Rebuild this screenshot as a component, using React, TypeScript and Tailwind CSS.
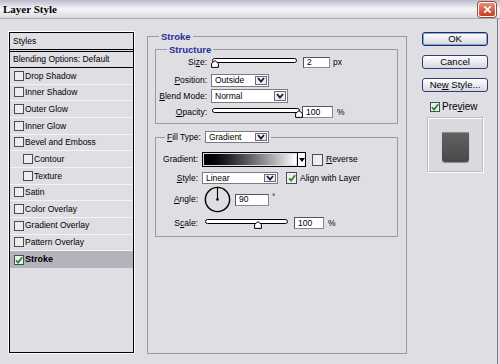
import type { ReactNode } from 'react';

function Check({ checked = false, className = '' }: { checked?: boolean; className?: string }) {
  return (
    <span
      className={`flex h-[10px] w-[10px] shrink-0 items-center justify-center border border-[#3f4f60] bg-[#eeeef2] ${className}`}
    >
      {checked && (
        <svg viewBox="0 0 8 8" className="h-[8px] w-[8px]">
          <path d="M1 4.2 L3.1 6.6 L7.2 1.2" fill="none" stroke="#1d8a22" strokeWidth="1.7" />
        </svg>
      )}
    </span>
  );
}

function Chevron() {
  return (
    <svg viewBox="0 0 8 6" className="h-[6px] w-[8px]">
      <polyline points="1,1 4,4.5 7,1" fill="none" stroke="#1a2240" strokeWidth="1.9" />
    </svg>
  );
}

function Select({ value, className }: { value: string; className: string }) {
  return (
    <div className={`flex items-stretch border border-[#7a7a86] bg-white ${className}`}>
      <span className="flex flex-1 items-center pl-[3px] text-[8.5px] leading-none">{value}</span>
      <span className="m-[1px] flex w-[12px] items-center justify-center border border-[#6c6c78] bg-[#ececf1]">
        <Chevron />
      </span>
    </div>
  );
}

function Field({ value, className }: { value: string; className: string }) {
  return (
    <div
      className={`flex items-center border border-[#8a8a94] border-t-[#55555f] border-l-[#55555f] bg-white pl-[3px] text-[8.5px] leading-none ${className}`}
    >
      {value}
    </div>
  );
}

function Slider({ className, thumb }: { className: string; thumb: string }) {
  return (
    <div className={`relative h-[9px] ${className}`}>
      <div className="h-[5px] w-full rounded-full border border-black bg-white" />
      <svg viewBox="0 0 8 8" className={`absolute top-[2px] h-[8px] w-[8px] ${thumb}`}>
        <path d="M4 0.6 L7.4 3.4 V7.4 H0.6 V3.4 Z" fill="#fff" stroke="#000" strokeWidth="1" />
      </svg>
    </div>
  );
}

function Row({ label, lw, className = '', children }: { label: ReactNode; lw: string; className?: string; children: ReactNode }) {
  return (
    <div className={`flex items-center ${className}`}>
      <span className={`${lw} shrink-0 pr-[4px] text-right text-[8.5px] leading-none`}>{label}</span>
      {children}
    </div>
  );
}

function Btn({ children, className = '', primary = false }: { children: ReactNode; className?: string; primary?: boolean }) {
  return (
    <div
      className={`flex h-[14px] w-[66px] items-center justify-center rounded-[3px] border bg-gradient-to-b from-white to-[#d6d6e0] text-[9.5px] leading-none ${
        primary ? 'border-[#1b2f60] shadow-[inset_0_0_0_1px_#8da4d6]' : 'border-[#2c3f70]'
      } ${className}`}
    >
      <span>{children}</span>
    </div>
  );
}

const styles: { name: string; sub?: boolean }[] = [
  { name: 'Drop Shadow' },
  { name: 'Inner Shadow' },
  { name: 'Outer Glow' },
  { name: 'Inner Glow' },
  { name: 'Bevel and Emboss' },
  { name: 'Contour', sub: true },
  { name: 'Texture', sub: true },
  { name: 'Satin' },
  { name: 'Color Overlay' },
  { name: 'Gradient Overlay' },
  { name: 'Pattern Overlay' },
];

function StyleList() {
  return (
    <div className="mt-[13px] flex h-[321px] w-[125px] shrink-0 flex-col border border-black text-[8.5px] leading-none shadow-[0_0_0_1px_#fff]">
      <div className="flex h-[19px] items-center border-b-[3px] border-double border-black pl-[3px]">Styles</div>
      <div className="flex h-[16px] items-center border-b border-black pl-[3px]">Blending Options: Default</div>
      {styles.map((s) => (
        <div
          key={s.name}
          className={`flex h-[16.67px] items-center gap-[1px] border-b border-[#f4f4f7] ${s.sub ? 'pl-[13px]' : 'pl-[4px]'}`}
        >
          <Check />
          <span>{s.name}</span>
        </div>
      ))}
      <div className="flex h-[16.67px] items-center gap-[1px] bg-[#b3b3bb] pl-[4px] text-[9px] font-bold">
        <Check checked />
        <span>Stroke</span>
      </div>
    </div>
  );
}

function StrokePanel() {
  return (
    <fieldset className="ml-[13px] mt-[12px] h-[323px] w-[260px] shrink-0 border border-[#9a9aa4]">
      <legend className="ml-[11px] px-[2px] text-[9.5px] font-bold leading-[11px] text-[#1f2f9e]">Stroke</legend>
      <div className="px-[7px]">
        {/* Structure */}
        <fieldset className="mt-[2px] h-[80px] w-[243px] border border-[#9a9aa4]">
          <legend className="ml-[11px] px-[2px] text-[9.5px] font-bold leading-[11px] text-[#1f2f9e]">Structure</legend>
          <Row lw="w-[55px]" className="h-[14px]" label={<>Si<span className="underline">z</span>e:</>}>
            <Slider className="ml-[1px] w-[85px]" thumb="left-[-1px]" />
            <Field value="2" className="ml-[6px] h-[11px] w-[27px]" />
            <span className="ml-[3px] text-[8.5px]">px</span>
          </Row>
          <Row lw="w-[55px]" className="mt-[4px] h-[14px]" label={<><span className="underline">P</span>osition:</>}>
            <Select value="Outside" className="h-[13px] w-[58px]" />
          </Row>
          <Row lw="w-[55px]" className="mt-[2px] h-[14px]" label={<><span className="underline">B</span>lend Mode:</>}>
            <Select value="Normal" className="h-[14px] w-[77px]" />
          </Row>
          <Row lw="w-[55px]" className="mt-[2px] h-[14px]" label={<><span className="underline">O</span>pacity:</>}>
            <Slider className="ml-[1px] w-[88px]" thumb="right-[-3px]" />
            <Field value="100" className="ml-[2px] h-[12px] w-[31px]" />
            <span className="ml-[4px] text-[8.5px]">%</span>
          </Row>
        </fieldset>

        {/* Fill */}
        <fieldset className="mt-[7px] h-[106px] w-[243px] border border-[#9a9aa4]">
          <legend className="ml-[9px] flex items-center px-[2px] text-[8.5px] leading-none">
            <span className="mr-[4px]">
              <span className="underline">F</span>ill Type:
            </span>
            <Select value="Gradient" className="h-[12px] w-[64px]" />
          </legend>
          <Row lw="w-[46px]" className="mt-[9px] h-[15px]" label="Gradient:">
            <div className="flex h-[15px] w-[104px] border border-black">
              <div className="m-[1px] flex-1 bg-gradient-to-r from-black to-white" />
              <div className="flex w-[8px] items-center justify-center border-l border-black bg-white">
                <svg viewBox="0 0 6 4" className="h-[4px] w-[6px]">
                  <path d="M0 0 H6 L3 4 Z" fill="#000" />
                </svg>
              </div>
            </div>
            <Check className="ml-[6px] h-[12px] w-[11px]" />
            <span className="ml-[3px] text-[8.5px]">
              <span className="underline">R</span>everse
            </span>
          </Row>
          <Row lw="w-[46px]" className="mt-[5px] h-[12px]" label={<><span className="underline">S</span>tyle:</>}>
            <Select value="Linear" className="h-[12px] w-[76px]" />
            <Check checked className="ml-[8px] h-[12px] w-[11px]" />
            <span className="ml-[3px] text-[8.5px]">Align with Layer</span>
          </Row>
          <Row lw="w-[46px]" className="mt-[2px] h-[27px]" label={<><span className="underline">A</span>ngle:</>}>
            <svg viewBox="0 0 28 28" className="ml-[2px] h-[27px] w-[27px]">
              <circle cx="14" cy="14" r="12.6" fill="none" stroke="#000" strokeWidth="1.5" />
              <line x1="14" y1="14" x2="14" y2="2" stroke="#000" strokeWidth="1.2" />
              <circle cx="14" cy="14" r="1.3" fill="#000" />
            </svg>
            <Field value="90" className="ml-[4px] h-[12px] w-[34px]" />
            <span className="ml-[3px] self-start pt-[5px] text-[8.5px] text-black">°</span>
          </Row>
          <Row lw="w-[46px]" className="mt-[4px] h-[12px]" label={<>S<span className="underline">c</span>ale:</>}>
            <Slider className="ml-[3px] w-[83px]" thumb="left-[49px]" />
            <Field value="100" className="ml-[6px] h-[12px] w-[30px]" />
            <span className="ml-[4px] text-[8.5px]">%</span>
          </Row>
        </fieldset>
      </div>
    </fieldset>
  );
}

function SideButtons() {
  return (
    <div className="ml-[15px] mt-[13px] flex w-[66px] shrink-0 flex-col">
      <Btn primary>OK</Btn>
      <Btn className="mt-[9px]">Cancel</Btn>
      <Btn className="mt-[9px]">
        Ne<span className="underline">w</span> Style...
      </Btn>
      <div className="ml-[8px] mt-[10px] flex items-center gap-[2px]">
        <Check checked />
        <span className="text-[10px] leading-none">
          Pre<span className="underline">v</span>iew
        </span>
      </div>
      <div className="ml-[5px] mt-[5px] flex h-[55px] w-[56px] items-start justify-center border border-[#bcbcc4] bg-[#dadade] pt-[14px] shadow-[inset_1px_1px_0_#fff,1px_1px_0_#fff]">
        <div className="h-[30px] w-[27px] rounded-b-[3px] rounded-t-[1px] bg-gradient-to-b from-[#626262] via-[#565656] to-[#484848] shadow-[inset_0_1px_0_#8c8c8c,0_1px_1px_#8a8a8a]" />
      </div>
    </div>
  );
}

export default function App() {
  return (
    <div className="flex h-[364px] w-[500px] flex-col overflow-hidden bg-[#dfdee3] font-['Liberation_Sans',Arial,sans-serif] text-black">
      <div className="flex h-[19px] shrink-0 items-center justify-between border-b border-[#a9a9b6] bg-gradient-to-b from-[#babbc9] via-[#f6f6f9] to-[#dadae3] pl-[3px] pr-[4px]">
        <span className="font-['Liberation_Serif',serif] text-[11px] font-bold leading-none">Layer Style</span>
        <div className="flex h-[15px] w-[18px] items-center justify-center rounded-[3px] border border-white bg-gradient-to-b from-[#ec8c74] to-[#c63b22] shadow-[0_0_0_1px_#9a4a3a]">
          <svg viewBox="0 0 10 10" className="h-[9px] w-[9px]">
            <path d="M1.5 1.5 L8.5 8.5 M8.5 1.5 L1.5 8.5" stroke="#fff" strokeWidth="1.8" />
          </svg>
        </div>
      </div>
      <div className="mr-[2px] flex flex-1 border-r border-[#7c7c88] pl-[9px]">
        <StyleList />
        <StrokePanel />
        <SideButtons />
      </div>
    </div>
  );
}
